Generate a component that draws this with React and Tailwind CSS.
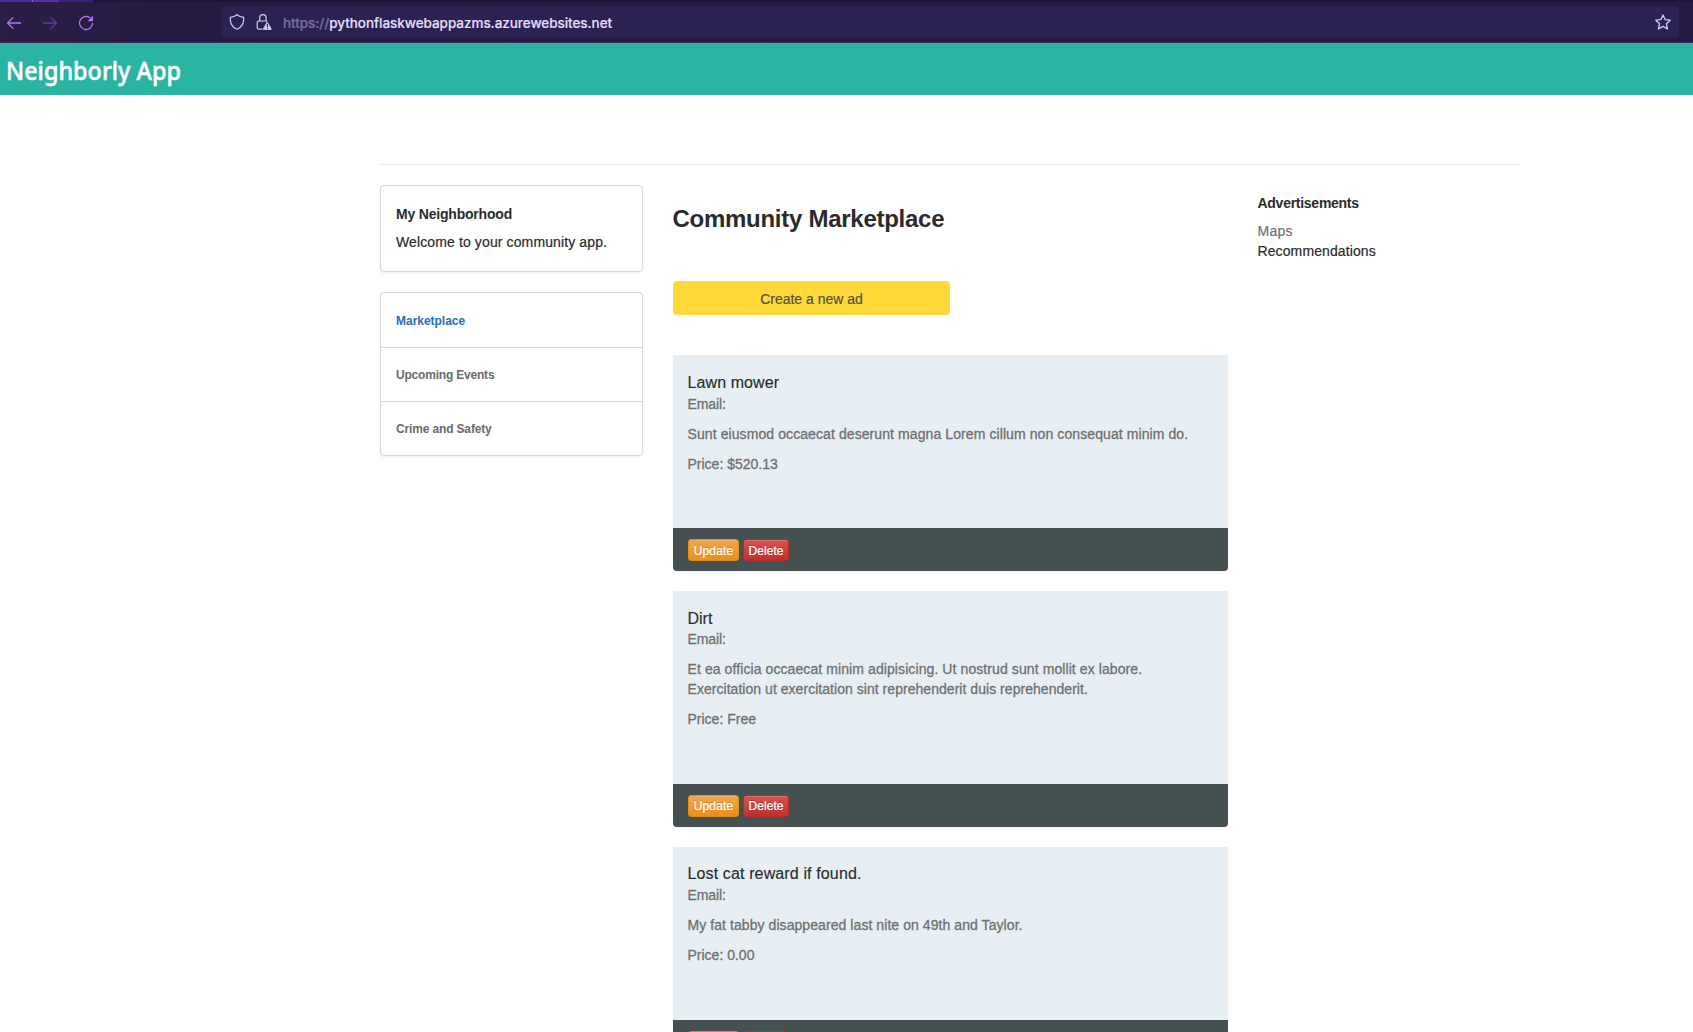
const ads = [
  {
    title: 'Lawn mower',
    titleClass: 'h-[23px] tracking-[0.1px]',
    lines: [{ text: 'Sunt eiusmod occaecat deserunt magna Lorem cillum non consequat minim do.', track: 'tracking-[0.09px]' }],
    price: '$520.13',
    bodyClass: 'h-[173px]',
    buttonClass: 'leading-[20px] pt-px',
  },
  {
    title: 'Dirt',
    titleClass: 'h-[22px] leading-[23px]',
    lines: [
      { text: 'Et ea officia occaecat minim adipisicing. Ut nostrud sunt mollit ex labore.', track: 'tracking-[0.09px]' },
      { text: 'Exercitation ut exercitation sint reprehenderit duis reprehenderit.', track: 'tracking-[0.04px]' },
    ],
    price: 'Free',
    bodyClass: 'h-[193px]',
    buttonClass: 'leading-[20px]',
  },
  {
    title: 'Lost cat reward if found.',
    titleClass: 'h-[22px] leading-[21px] tracking-[0.13px]',
    lines: [{ text: 'My fat tabby disappeared last nite on 49th and Taylor.', track: 'tracking-[0.07px]' }],
    price: '0.00',
    bodyClass: 'h-[173px]',
    buttonClass: 'leading-[20px]',
  },
];

function BrowserBar() {
  return (
    <header className="flex h-[43px] flex-col border-b border-[#3a2a66] bg-linear-to-r from-[#2a1d46] to-[#241a43] to-15%">
      <div className="flex h-[2px] shrink-0 bg-[#1f1538]">
        <div className="w-[32px] bg-[#4f2aa6]" />
        <div className="w-px bg-[#8468c4]" />
        <div className="w-[26px] bg-[#5a2cb4]" />
        <div className="w-[34px] bg-[#3a1f80]" />
      </div>
      <div className="flex flex-1 items-center pr-[14px]">
        <svg className="ml-[6px] mt-[2px] h-4 w-4" viewBox="0 0 16 16" fill="none" stroke="#b477f5" strokeWidth="1.3" strokeLinecap="round" strokeLinejoin="round">
          <path d="M14.6 8H1.6M7 2.6 1.5 8 7 13.4" />
        </svg>
        <svg className="ml-[20px] mt-[2px] h-4 w-4" viewBox="0 0 16 16" fill="none" stroke="#5f3c8c" strokeWidth="1.3" strokeLinecap="round" strokeLinejoin="round">
          <path d="M1.4 8h13M9 2.6 14.5 8 9 13.4" />
        </svg>
        <svg className="ml-[20px] mt-[2px] h-4 w-4" viewBox="0 0 16 16" fill="none" stroke="#b477f5" strokeWidth="1.3" strokeLinecap="round">
          <path d="M11.800 2.700A6.500 6.500 0 1 0 14.500 8.300" />
          <path d="M15 .8v5.400H9.600z" fill="#b477f5" stroke="none" />
        </svg>
        <div className="ml-[127px] flex h-8 flex-1 items-center rounded bg-[#2b2152]">
          <svg className="ml-2 h-4 w-4" viewBox="0 0 16 16" fill="none" stroke="#d5cdef" strokeWidth="1.2" strokeLinejoin="round">
            <path d="M8 .7c1.900 1.500 4.100 2.300 6.700 2.600.2 2.800-.2 5.200-1.300 7.300-1.100 2-2.900 3.600-5.400 4.700-2.500-1.100-4.300-2.700-5.400-4.700C1.500 8.500 1.100 6.100 1.300 3.300 3.900 3 6.100 2.200 8 .7z" />
          </svg>
          <svg className="ml-[11px] h-4 w-4" viewBox="0 0 16 16" fill="none" stroke="#d5cdef" strokeWidth="1.2" strokeLinecap="round">
            <path d="M3.700 7V3.900a3.100 3.100 0 0 1 6.400 0V7" />
            <path d="M5.800 15.200H3A1.800 1.800 0 0 1 1.200 13.400V8.700A1.700 1.700 0 0 1 3 7h7.600" />
            <path d="M11.400 8.500 15.300 15.300H7.500z" fill="#d5cdef" strokeWidth="1" strokeLinejoin="round" />
            <path d="M11.400 10.400v2.200M11.400 14.200v.2" stroke="#2b2152" strokeWidth="1.100" />
          </svg>
          <div className="ml-[11px] flex-1 whitespace-nowrap pt-[2px] font-['Inter',sans-serif] text-[13.500px] font-medium leading-5 tracking-[-0.050px] text-[#e4defa]">
            <span className="text-[#7b7199]">https://</span>
            <span>pythonflaskwebappazms.azurewebsites.net</span>
          </div>
          <svg className="mr-2 h-4 w-4" viewBox="0 0 16 16" fill="none" stroke="#d5cdef" strokeWidth="1.300" strokeLinejoin="round">
            <path d="M8 1 10.100 5.600 15.200 6.200 11.400 9.700 12.500 15 8 12.400 3.500 15 4.600 9.700.8 6.200 5.900 5.600z" />
          </svg>
        </div>
      </div>
    </header>
  );
}

function AdCard({ ad }) {
  return (
    <article className="mb-5 overflow-hidden rounded-b-[4px] shadow-[0_1px_1px_rgba(0,0,0,0.05)]">
      <div className={`bg-[#e7eff5] pl-[14.500px] pr-[14px] pt-4 text-[#707070] [-webkit-text-stroke:0.300px] ${ad.bodyClass}`}>
        <h3 className={`text-base text-[#2b2b2b] [-webkit-text-stroke:0.150px] ${ad.titleClass}`}>{ad.title}</h3>
        <p className="mb-[10px] tracking-[-0.080px]">Email:</p>
        <p className="mb-[10px]">
          {ad.lines.map((line) => (
            <span key={line.text} className={`block ${line.track}`}>{line.text}</span>
          ))}
        </p>
        <p>Price: {ad.price}</p>
      </div>
      <div className="flex h-[43px] items-start gap-1 bg-[#445150] px-[14px] pt-[11px] text-center text-xs text-white">
        <a className={`ml-px h-[22px] w-[51px] rounded-[3px] border border-[#e38d13] bg-linear-to-b from-[#f0a84a] to-[#eb8f16] tracking-[0.150px] shadow-[inset_0_1px_0_rgba(255,255,255,0.15)] [text-shadow:0_-1px_0_rgba(0,0,0,0.2)] ${ad.buttonClass}`}>Update</a>
        <a className={`h-[22px] w-[46px] rounded-[3px] border border-[#b92c28] bg-linear-to-b from-[#d9534f] to-[#c12e2a] tracking-[0.050px] shadow-[inset_0_1px_0_rgba(255,255,255,0.15)] [text-shadow:0_-1px_0_rgba(0,0,0,0.2)] ${ad.buttonClass}`}>Delete</a>
      </div>
    </article>
  );
}

export default function App() {
  return (
    <div className="h-[1032px] overflow-hidden bg-white font-['Liberation_Sans',Arial,sans-serif] text-sm leading-5 text-[#2b2b2b] [-webkit-text-stroke:0.200px]">
      <BrowserBar />
      <nav className="flex h-[52px] items-center bg-[#2cb4a3] pl-[5px] pt-[2px] text-white">
        <span className="ml-px origin-left scale-x-[0.900] whitespace-nowrap font-['Noto_Sans',sans-serif] text-[26px] font-medium leading-9 [-webkit-text-stroke:0.500px]">Neighborly App</span>
      </nav>
      <div className="ml-[380px] w-[1140px]">
        <hr className="mb-5 mt-[69px] border-t border-[#eaeaea]" />
        <div className="flex">
          <aside className="w-[263px] shrink-0 font-normal">
            <section className="mb-5 h-[87px] rounded-[4px] border border-[#d8d8d8] px-[15px] pt-[18px] shadow-[0_1px_2px_rgba(0,0,0,0.08)]">
              <h4 className="mb-2 font-bold tracking-[-0.200px] [-webkit-text-stroke:0]">My Neighborhood</h4>
              <p className="tracking-[0.120px]">Welcome to your community app.</p>
            </section>
            <ul className="divide-y divide-[#d8d8d8] rounded-[4px] border border-[#d8d8d8] text-xs font-bold text-[#6b6b6b] shadow-[0_1px_2px_rgba(0,0,0,0.08)] [-webkit-text-stroke:0]">
              <li className="flex h-[55px] items-center px-[15px] pt-px tracking-[-0.020px] text-[#276eb0]">Marketplace</li>
              <li className="flex h-[54px] items-center px-[15px] tracking-[-0.200px]">Upcoming Events</li>
              <li className="flex h-[53px] items-center px-[15px] tracking-[-0.150px]">Crime and Safety</li>
            </ul>
          </aside>
          <main className="ml-[30px] w-[555px] shrink-0">
            <h1 className="ml-[-0.500px] mt-5 text-2xl font-bold leading-[28px] tracking-[-0.270px] [-webkit-text-stroke:0]">Community Marketplace</h1>
            <a className="mb-10 mt-[48px] flex h-[34px] w-[277px] items-center justify-center rounded-[4px] bg-[#ffd937] pt-[2px] text-[#505050]">Create a new ad</a>
            {ads.map((ad) => <AdCard key={ad.title} ad={ad} />)}
          </main>
          <aside className="ml-[29.500px] pt-2">
            <h4 className="mb-2 font-bold tracking-[-0.270px] [-webkit-text-stroke:0]">Advertisements</h4>
            <p className="tracking-[0.250px] text-[#707070]">Maps</p>
            <p className="tracking-[0.110px]">Recommendations</p>
          </aside>
        </div>
      </div>
    </div>
  );
}
